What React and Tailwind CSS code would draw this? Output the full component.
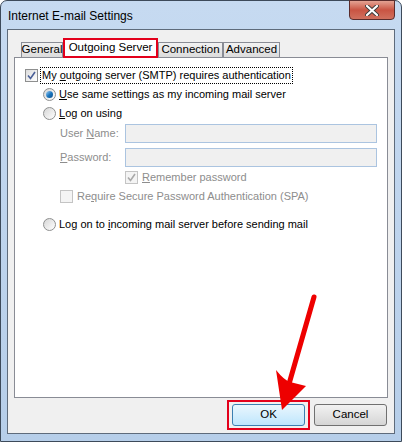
import React from "react";

const FONT = { fontFamily: '"Liberation Sans", Arial, sans-serif' };

function Check({ checked, disabled }) {
  return (
    <span
      className={`inline-flex items-center justify-center w-[13px] h-[13px] shrink-0 border ${
        disabled ? "border-[#c4c4c4] bg-[#f4f4f4]" : "border-[#8e8f8f] bg-gradient-to-br from-[#dcdcdc] to-white"
      }`}
    >
      {checked && (
        <svg width="9" height="9" viewBox="0 0 9 9">
          <path
            d="M1 4.5 L3.5 7.5 L8 1"
            fill="none"
            stroke={disabled ? "#a9a9a9" : "#4a5f97"}
            strokeWidth="1.6"
          />
        </svg>
      )}
    </span>
  );
}

function Radio({ checked }) {
  return (
    <span className="inline-flex items-center justify-center w-[13px] h-[13px] shrink-0 rounded-full border border-[#8e8f8f] bg-gradient-to-br from-[#d6d6d6] to-white">
      {checked && (
        <span className="w-[7px] h-[7px] rounded-full bg-gradient-to-br from-[#9fd4f5] via-[#1c78c0] to-[#0d4f8c]" />
      )}
    </span>
  );
}

function Tab({ children, selected, w }) {
  if (selected) {
    return (
      <div className={`h-[20px] border-2 border-[#e3001b] bg-white flex items-center justify-center -mb-[1px] relative z-10 ${w}`}>
        <span className="text-[11.5px] leading-none whitespace-nowrap">{children}</span>
      </div>
    );
  }
  return (
    <div className={`h-[15px] border border-b-0 border-[#898c95] bg-gradient-to-b from-[#f2f2f2] to-[#dcdcdc] flex items-center justify-center ${w}`}>
      <span className="text-[11.5px] leading-none whitespace-nowrap">{children}</span>
    </div>
  );
}

export default function App() {
  return (
    <div
      className="w-[402px] h-[442px] relative overflow-hidden bg-white text-black"
      style={FONT}
    >
      <div className="w-[402px] h-[442px] rounded-t-[7px] border border-[#3d4a5a] bg-gradient-to-b from-[#c6daf1] to-[#b6cee9] flex flex-col">
        {/* title bar */}
        <div className="h-[28px] relative flex items-center pl-[7px] pt-[1px]">
          <span className="text-[12px] text-black whitespace-nowrap">Internet E-mail Settings</span>
          <div className="absolute right-[6px] top-[-1px] w-[46px] h-[20px] rounded-b-[4px] border border-[#5a2c2c] bg-gradient-to-b from-[#e3a293] via-[#c95443] to-[#d0705e] flex items-center justify-center">
            <svg width="14" height="11" viewBox="0 0 14 11">
              <path d="M2 1 L12 10 M12 1 L2 10" stroke="#3a3a3a" strokeWidth="4" strokeLinecap="round" />
              <path d="M2 1 L12 10 M12 1 L2 10" stroke="#ffffff" strokeWidth="2.2" strokeLinecap="round" />
            </svg>
          </div>
        </div>

        {/* client area */}
        <div className="ml-[6px] w-[388px] h-[405px] border border-[#5e6b7b] bg-[#f0f0f0] flex flex-col px-[6px] pt-[8px] pb-[3px]">
          {/* tabs */}
          <div className="flex items-end h-[19px] pl-[7px]">
            <Tab w="w-[42px]">General</Tab>
            <Tab selected w="w-[95px]">Outgoing Server</Tab>
            <Tab w="w-[65px]">Connection</Tab>
            <Tab w="w-[57px]">Advanced</Tab>
          </div>

          {/* panel */}
          <div className="h-[341px] border border-[#898c95] bg-white pt-[8px] pl-[10px] text-[11px] whitespace-nowrap">
            <div className="h-[19px] flex items-center gap-[2px]">
              <Check checked />
              <span className="border border-dotted border-black px-[1px] leading-[15px]">
                My <u>o</u>utgoing server (SMTP) requires authentication
              </span>
            </div>
            <div className="pl-[18px]">
              <div className="h-[19px] flex items-center gap-[3px]">
                <Radio checked />
                <span>
                  <u>U</u>se same settings as my incoming mail server
                </span>
              </div>
              <div className="h-[19px] flex items-center gap-[3px]">
                <Radio />
                <span>
                  <u>L</u>og on using
                </span>
              </div>
              <div className="pl-[17px] text-[#8d8d8d]">
                <div className="mt-[1px] h-[19px] flex items-center">
                  <span className="w-[65px]">
                    User <u>N</u>ame:
                  </span>
                  <div className="w-[252px] h-[19px] border border-[#abc4e0] bg-[#f0f0f0]" />
                </div>
                <div className="mt-[5px] h-[19px] flex items-center">
                  <span className="w-[65px]">
                    <u>P</u>assword:
                  </span>
                  <div className="w-[252px] h-[19px] border border-[#abc4e0] bg-[#f0f0f0]" />
                </div>
                <div className="mt-[1px] h-[19px] flex items-center gap-[4px] pl-[65px]">
                  <Check checked disabled />
                  <span>
                    <u>R</u>emember password
                  </span>
                </div>
                <div className="h-[19px] flex items-center gap-[4px]">
                  <Check disabled />
                  <span>
                    Re<u>q</u>uire Secure Password Authentication (SPA)
                  </span>
                </div>
              </div>
              <div className="mt-[9px] h-[19px] flex items-center gap-[3px]">
                <Radio />
                <span>
                  Log on to <u>i</u>ncoming mail server before sending mail
                </span>
              </div>
            </div>
          </div>

          {/* buttons */}
          <div className="mt-[2px] flex items-center justify-end gap-[4px] pr-[1px] text-[11.5px]">
            <div className="border-2 border-[#e3001b] px-[3px] py-[2px]">
              <button className="w-[73px] h-[22px] rounded-[3px] border border-[#3c7fb1] bg-gradient-to-b from-[#eaf6fd] to-[#bee6fd] flex items-center justify-center">
                OK
              </button>
            </div>
            <button className="w-[73px] h-[22px] rounded-[3px] border border-[#707070] bg-gradient-to-b from-[#f2f2f2] to-[#d5d5d5] flex items-center justify-center">
              Cancel
            </button>
          </div>
        </div>
      </div>

      {/* annotation arrow */}
      <svg className="absolute left-0 top-0 pointer-events-none" width="402" height="442">
        <path d="M314 297 L289 384" stroke="#ee0000" strokeWidth="5" strokeLinecap="round" />
        <path d="M282 410 L276 370 Q284 380 290 382 Q298 384 306 386 Z" fill="#ee0000" />
      </svg>
    </div>
  );
}
